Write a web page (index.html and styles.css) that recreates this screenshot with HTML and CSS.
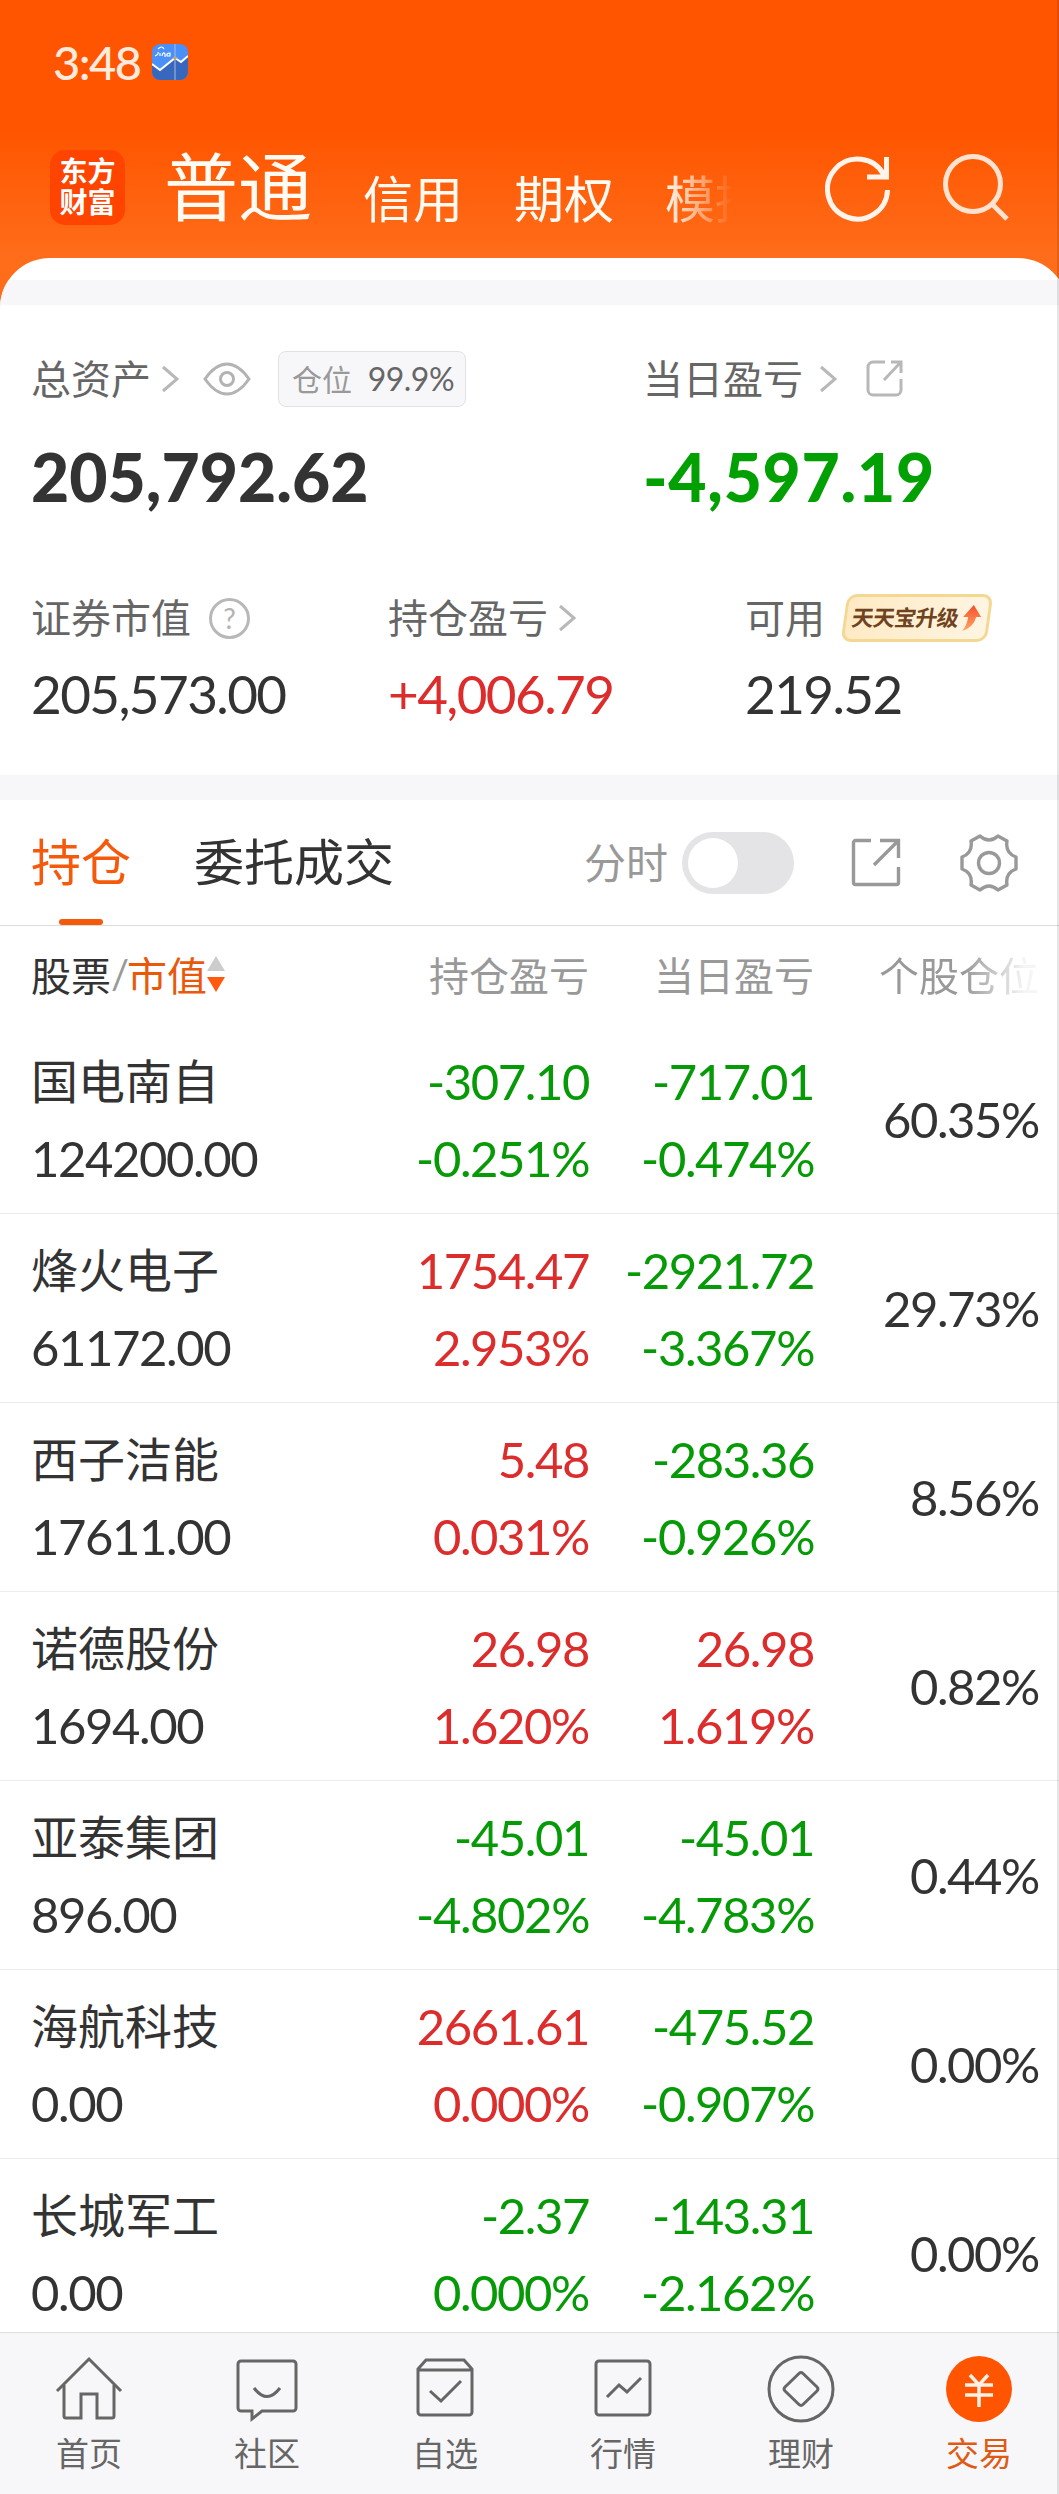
FILE: index.html
```html
<!DOCTYPE html>
<html lang="zh-CN">
<head>
    <meta charset="UTF-8">
    <meta name="viewport" content="width=device-width, initial-scale=1.0">
    <title>交易 - 持仓</title>
    <link rel="stylesheet" href="styles.css">
</head>
<body>
    <div class="app">
        <header class="header">
            <div class="status-bar">
                <span class="time">3:48</span>
                <svg class="status-icon" width="36" height="36" viewBox="0 0 36 36">
                    <rect width="36" height="36" rx="8" fill="#4a90f8"/>
                    <path d="M0 20l8 6 15-12 6 4 7-6v16a8 8 0 0 1-8 8H8a8 8 0 0 1-8-8z" fill="#3768bd"/>
                    <path d="M0 20l8 6 15-12 6 4 7-6" fill="none" stroke="#fff" stroke-width="2"/>
                    <path d="M23 0v36" stroke="#a9bddd" stroke-width="1"/>
                    <path d="M3 12q4-2 3-4M8 12v-3M10 12q1-5 3-2v3M18 9q-4 0-3 3h3zM6 5q4-4 6 0" fill="none" stroke="#fff" stroke-width="1.2"/>
                    <circle cx="23" cy="14" r="1.8" fill="#c8a468"/>
                </svg>
            </div>
            <div class="top-nav">
                <div class="logo">东方<br>财富</div>
                <nav class="account-tabs">
                    <a class="account-tab current">普通</a>
                    <a class="account-tab">信用</a>
                    <a class="account-tab">期权</a>
                    <a class="account-tab">模拟</a>
                </nav>
                <svg class="refresh" width="66" height="68" viewBox="0 0 66 68" fill="none" stroke="#fff4ec" stroke-width="5">
                    <path d="M62.500 35A30 30 0 1 1 59 20"/>
                    <path d="M61.500 2v20H42"/>
                </svg>
                <svg class="search" width="68" height="68" viewBox="0 0 68 68" fill="none" stroke="#ffe3d0" stroke-width="5">
                    <circle cx="31" cy="31" r="27.500"/>
                    <path d="M50 51l15 15"/>
                </svg>
            </div>
        </header>

        <main class="content">
            <div class="gap-bar first"></div>
            <section class="summary">
                <div class="summary-main">
                    <div class="total">
                        <div class="label">
                            <span>总资产</span>
                            <svg class="chevron near" width="18" height="28" viewBox="0 0 18 28"><path d="M2 2l14 12L2 26"/></svg>
                            <svg class="eye" width="48" height="34" viewBox="0 0 48 34" fill="none" stroke="#b3b3b3" stroke-width="3">
                                <path d="M2 17C9 7 16 2 24 2s15 5 22 15C39 27 32 32 24 32S9 27 2 17z"/>
                                <circle cx="24" cy="17" r="6.500"/>
                            </svg>
                            <span class="position-tag">仓位 <b>99.9%</b></span>
                        </div>
                        <div class="big">205,792.62</div>
                    </div>
                    <div class="today">
                        <div class="label">
                            <span>当日盈亏</span>
                            <svg class="chevron far" width="18" height="28" viewBox="0 0 18 28"><path d="M2 2l14 12L2 26"/></svg>
                            <svg class="share-small" width="38" height="38" viewBox="0 0 38 38" fill="none" stroke="#b8b8b8" stroke-width="3">
                                <path d="M19 2H7a5 5 0 0 0-5 5v23a5 5 0 0 0 5 5h23a5 5 0 0 0 5-5V19"/>
                                <path d="M25 2h10v11M34 3L18 20"/>
                            </svg>
                        </div>
                        <div class="big green">-4,597.19</div>
                    </div>
                </div>
                <div class="summary-sub">
                    <div class="item">
                        <div class="label">
                            <span>证券市值</span>
                            <span class="help">?</span>
                        </div>
                        <div class="value">205,573.00</div>
                    </div>
                    <div class="item">
                        <div class="label">
                            <span>持仓盈亏</span>
                            <svg class="chevron near" width="18" height="28" viewBox="0 0 18 28"><path d="M2 2l14 12L2 26"/></svg>
                        </div>
                        <div class="value red">+4,006.79</div>
                    </div>
                    <div class="item">
                        <div class="label">
                            <span>可用</span>
                            <span class="promo">
                                <span>天天宝升级</span>
                                <svg width="20" height="26" viewBox="0 0 20 26">
                                    <defs>
                                        <linearGradient id="arrow" x1="0" y1="0" x2="0" y2="1">
                                            <stop offset="0" stop-color="#f4502a"/>
                                            <stop offset="1" stop-color="#ffa766"/>
                                        </linearGradient>
                                    </defs>
                                    <path d="M10 0l9 12h-5q-1 10-12 14 4-6 4-14H1z" fill="url(#arrow)"/>
                                </svg>
                            </span>
                        </div>
                        <div class="value">219.52</div>
                    </div>
                </div>
            </section>
            <div class="gap-bar"></div>

            <div class="tabs">
                <a class="tab active">持仓</a>
                <a class="tab">委托成交</a>
                <div class="tools">
                    <span class="switch-label">分时</span>
                    <span class="switch"></span>
                    <svg class="share" width="50" height="50" viewBox="0 0 50 50" fill="none" stroke="#999" stroke-width="3.400">
                        <path d="M20 2.500H4.500a2 2 0 0 0-2 2v40a2 2 0 0 0 2 2h41a2 2 0 0 0 2-2V29"/>
                        <path d="M29 2.500h18.500V20M46 4L23 27"/>
                    </svg>
                    <svg class="gear" width="58" height="58" viewBox="0 0 58 58" fill="none" stroke="#999" stroke-width="3.400" stroke-linejoin="round">
                        <path d="M20 2Q29 10 38 2L47 7Q45 19 56 23V35Q45 39 47 51L38 56Q29 48 20 56L11 51Q13 39 2 35V23Q13 19 11 7z"/>
                        <circle cx="29" cy="29" r="10.500"/>
                    </svg>
                </div>
            </div>

            <section class="holdings">
                <div class="row head">
                    <div class="sort">
                        <span class="dark">股票</span><span class="slash">/</span><span class="orange">市值</span>
                        <svg width="18" height="36" viewBox="0 0 18 36">
                            <path d="M9 0l9 15H0z" fill="#ccc"/>
                            <path d="M9 36l9-15H0z" fill="#ff5a0f"/>
                        </svg>
                    </div>
                    <div>持仓盈亏</div>
                    <div>当日盈亏</div>
                    <div class="fade">个股仓位</div>
                </div>
                <div class="row">
                    <div class="stock"><span class="name">国电南自</span><span>124200.00</span></div>
                    <div class="cell green"><span>-307.10</span><span>-0.251%</span></div>
                    <div class="cell green"><span>-717.01</span><span>-0.474%</span></div>
                    <div class="ratio">60.35%</div>
                </div>
                <div class="row">
                    <div class="stock"><span class="name">烽火电子</span><span>61172.00</span></div>
                    <div class="cell red"><span>1754.47</span><span>2.953%</span></div>
                    <div class="cell green"><span>-2921.72</span><span>-3.367%</span></div>
                    <div class="ratio">29.73%</div>
                </div>
                <div class="row">
                    <div class="stock"><span class="name">西子洁能</span><span>17611.00</span></div>
                    <div class="cell red"><span>5.48</span><span>0.031%</span></div>
                    <div class="cell green"><span>-283.36</span><span>-0.926%</span></div>
                    <div class="ratio">8.56%</div>
                </div>
                <div class="row">
                    <div class="stock"><span class="name">诺德股份</span><span>1694.00</span></div>
                    <div class="cell red"><span>26.98</span><span>1.620%</span></div>
                    <div class="cell red"><span>26.98</span><span>1.619%</span></div>
                    <div class="ratio">0.82%</div>
                </div>
                <div class="row">
                    <div class="stock"><span class="name">亚泰集团</span><span>896.00</span></div>
                    <div class="cell green"><span>-45.01</span><span>-4.802%</span></div>
                    <div class="cell green"><span>-45.01</span><span>-4.783%</span></div>
                    <div class="ratio">0.44%</div>
                </div>
                <div class="row">
                    <div class="stock"><span class="name">海航科技</span><span>0.00</span></div>
                    <div class="cell red"><span>2661.61</span><span>0.000%</span></div>
                    <div class="cell green"><span>-475.52</span><span>-0.907%</span></div>
                    <div class="ratio">0.00%</div>
                </div>
                <div class="row">
                    <div class="stock"><span class="name">长城军工</span><span>0.00</span></div>
                    <div class="cell green"><span>-2.37</span><span>0.000%</span></div>
                    <div class="cell green"><span>-143.31</span><span>-2.162%</span></div>
                    <div class="ratio">0.00%</div>
                </div>
            </section>
        </main>

        <nav class="bottom-nav">
            <a class="nav-item">
                <svg width="68" height="68" viewBox="0 0 68 68">
                    <path d="M2 36L34 4l32 32"/>
                    <path d="M9 30v31a2 2 0 0 0 2 2h15V39h16v24h15a2 2 0 0 0 2-2V30"/>
                </svg>
                <span>首页</span>
            </a>
            <a class="nav-item">
                <svg width="68" height="68" viewBox="0 0 68 68">
                    <path d="M8 6h52a3 3 0 0 1 3 3v44a3 3 0 0 1-3 3H29l-10 8v-8H8a3 3 0 0 1-3-3V9a3 3 0 0 1 3-3z"/>
                    <path d="M21 33q13 17 26 0"/>
                </svg>
                <span>社区</span>
            </a>
            <a class="nav-item">
                <svg width="68" height="68" viewBox="0 0 68 68">
                    <path d="M7 14l8-9h38l8 9v43a3 3 0 0 1-3 3H10a3 3 0 0 1-3-3zM7 15h54"/>
                    <path d="M19 36l11 10 20-20"/>
                </svg>
                <span>自选</span>
            </a>
            <a class="nav-item">
                <svg width="68" height="68" viewBox="0 0 68 68">
                    <rect x="7" y="6" width="54" height="54" rx="3"/>
                    <path d="M18 42l12-12 8 7 14-14"/>
                </svg>
                <span>行情</span>
            </a>
            <a class="nav-item">
                <svg width="68" height="68" viewBox="0 0 68 68">
                    <circle cx="34" cy="34" r="32"/>
                    <path d="M36 18.500l14 13.500q2 2 0 4L36 49.500q-2 2-4 0L18 36q-2-2 0-4l14-13.500q2-2 4 0z"/>
                </svg>
                <span>理财</span>
            </a>
            <a class="nav-item active">
                <svg width="68" height="68" viewBox="0 0 68 68">
                    <circle class="coin" cx="34" cy="34" r="33"/>
                    <path class="yen" d="M25 20l9 10 9-10M34 30v22M20 30h28M20 40h28"/>
                </svg>
                <span>交易</span>
            </a>
        </nav>
    </div>
    <div class="edge"></div>
</body>
</html>
```
FILE: styles.css
```css
* {
    box-sizing: border-box;
}
body {
    margin: 0;
    height: 2494px;
    overflow: hidden;
    background-color: #fff;
    color: #333;
    font-family: Lato, "Noto Sans CJK SC", sans-serif;
}
svg {
    display: block;
    flex-shrink: 0;
}
/* the app is a little wider than the window */
.app {
    width: 1068px;
    height: 2494px;
    display: flex;
    flex-direction: column;
    overflow: hidden;
    background: linear-gradient(#ff5500 130px, #ff6d1a 258px, #ff6d1a 320px);
}
.green {
    color: #079a07;
}
.red {
    color: #dc2c2c;
}
.orange {
    color: #e8590c;
}
.dark {
    color: #333;
}

/* header */
.header {
    height: 258px;
    flex-shrink: 0;
}
.status-bar {
    display: flex;
    align-items: center;
    height: 124px;
    padding: 0 0 0 53px;
}
.time {
    width: 99px;
    color: #ffeadd;
    font-size: 47px;
    font-weight: 500;
    letter-spacing: -1.5px;
}
.top-nav {
    display: flex;
    height: 134px;
    padding-left: 50px;
}
.logo {
    width: 75px;
    height: 75px;
    margin-top: 26px;
    padding-top: 6px;
    border-radius: 15px;
    background-color: #ff4400;
    color: #fff;
    font-size: 28px;
    font-weight: 700;
    line-height: 31px;
    text-align: center;
}
.account-tabs {
    display: flex;
    align-items: baseline;
    width: 608px;
    height: 134px;
    padding-left: 39px;
    overflow: hidden;
    white-space: nowrap;
    -webkit-mask-image: linear-gradient(90deg, #000 540px, transparent 608px);
    mask-image: linear-gradient(90deg, #000 540px, transparent 608px);
}
.account-tab {
    margin-right: 51px;
    color: #fffaf2;
    font-size: 50px;
    line-height: 125px;
    transform: translateY(3px);
}
.account-tab.current {
    margin-right: 51px;
    font-size: 74px;
    transform: none;
}
.refresh {
    margin: 31px 0 0 92px;
}
.search {
    margin: 29px 0 0 51px;
}

/* summary */
.content {
    flex: 1;
    min-height: 0;
    overflow: hidden;
    background-color: #fff;
    border-radius: 50px 50px 0 0;
}
.gap-bar {
    height: 25px;
    background-color: #f7f7f9;
}
.gap-bar.first {
    margin-top: 22px;
}
.summary {
    height: 470px;
    padding: 46px 0 0 31px;
}
.summary-main {
    display: grid;
    grid-template-columns: 612px 1fr;
    height: 239px;
}
.summary-sub {
    display: grid;
    grid-template-columns: repeat(3, 357px);
}
.label {
    display: flex;
    align-items: center;
    height: 56px;
    color: #666;
    font-size: 40px;
    line-height: 56px;
    white-space: nowrap;
}
.chevron {
    fill: none;
    stroke: #b8b8b8;
    stroke-width: 3;
}
.chevron.near {
    margin-left: 10px;
}
.chevron.far {
    margin-left: 16px;
}
.eye {
    margin-left: 24px;
}
.position-tag {
    width: 188px;
    height: 56px;
    margin-left: 27px;
    padding-left: 13px;
    border: 1px solid #e2e2e4;
    border-radius: 8px;
    background-color: #f7f7f9;
    color: #999;
    font-size: 30px;
    line-height: 53px;
}
.position-tag b {
    margin-left: 8px;
    color: #666;
    font-size: 32px;
    font-weight: 400;
    letter-spacing: -0.5px;
}
.share-small {
    margin-left: 29px;
}
.big {
    margin-top: 30px;
    font-size: 66px;
    font-weight: 900;
    line-height: 80px;
    letter-spacing: 0;
}
.big.green {
    color: #02a002;
    letter-spacing: 0.7px;
}
.value {
    margin-top: 16px;
    font-size: 53px;
    line-height: 64px;
    letter-spacing: -1.6px;
}
.help {
    width: 41px;
    height: 41px;
    margin-left: 18px;
    border: 3px solid #b8b8b8;
    border-radius: 50%;
    color: #b3b3b3;
    font-size: 28px;
    line-height: 35px;
    text-align: center;
}
.promo {
    display: flex;
    align-items: center;
    justify-content: center;
    gap: 4px;
    width: 146px;
    height: 48px;
    margin-left: 19px;
    border: 3px solid #f4d791;
    border-radius: 10px;
    background: linear-gradient(90deg, #ffeac4, #fff5e2);
    color: #70431f;
    font-size: 22px;
    font-weight: 700;
    letter-spacing: -0.8px;
    transform: skewX(-8deg);
}

/* tabs */
.tabs {
    display: flex;
    height: 126px;
    padding-left: 31px;
    border-bottom: 1px solid #dcdcdc;
}
.tab {
    position: relative;
    margin-right: 63px;
    font-size: 50px;
    line-height: 125px;
}
.tab.active {
    color: #f55a0c;
}
.tab.active::after {
    content: "";
    position: absolute;
    left: 28px;
    bottom: 0;
    width: 44px;
    height: 6px;
    border-radius: 3px;
    background-color: #f55a0c;
}
.tools {
    display: flex;
    align-items: center;
    margin-left: 127px;
    color: #999;
    font-size: 42px;
}
.switch-label {
    padding-bottom: 4px;
}
.switch {
    width: 112px;
    height: 62px;
    margin-left: 14px;
    padding: 6px;
    border-radius: 31px;
    background-color: #e4e4e6;
}
.switch::before {
    content: "";
    display: block;
    width: 50px;
    height: 50px;
    border-radius: 50%;
    background-color: #fff;
}
.share {
    margin-left: 57px;
}
.gear {
    margin-left: 59px;
}

/* holdings */
.row {
    display: grid;
    grid-template-columns: 302px 256px 225px 225px;
    align-items: center;
    height: 189px;
    padding-left: 31px;
    border-bottom: 1px solid #ececec;
    font-size: 49px;
    letter-spacing: -1.4px;
    text-align: right;
}
.row.head {
    height: 99px;
    padding-bottom: 4px;
    border-bottom: none;
    color: #999;
    font-size: 40px;
    letter-spacing: 0;
}
.sort {
    display: flex;
    align-items: center;
    white-space: nowrap;
}
.slash {
    width: 16px;
}
.fade {
    -webkit-mask-image: linear-gradient(90deg, #000 150px, rgba(0, 0, 0, 0.1) 210px);
    mask-image: linear-gradient(90deg, #000 150px, rgba(0, 0, 0, 0.1) 210px);
}
.stock,
.cell {
    display: flex;
    flex-direction: column;
    padding-top: 1px;
    line-height: 77px;
}
.stock {
    text-align: left;
}
.name {
    font-size: 47px;
    letter-spacing: 0;
}

/* bottom navigation */
.bottom-nav {
    display: flex;
    height: 162px;
    flex-shrink: 0;
    border-top: 1px solid #dedee0;
    background-color: #f7f7f9;
}
.nav-item {
    display: flex;
    flex-direction: column;
    align-items: center;
    width: 178px;
    padding-top: 22px;
    color: #666;
    font-size: 33px;
    line-height: 60px;
}
.nav-item svg {
    fill: none;
    stroke: #666;
    stroke-width: 3;
}
.nav-item.active {
    color: #e05a14;
}
.nav-item .coin {
    fill: #ff5500;
    stroke: none;
}
.nav-item .yen {
    stroke: #fff0e6;
    stroke-width: 3.5;
}

.edge {
    position: fixed;
    top: 0;
    right: 0;
    width: 2px;
    height: 100%;
    background-color: rgba(0, 0, 0, 0.1);
}
```
